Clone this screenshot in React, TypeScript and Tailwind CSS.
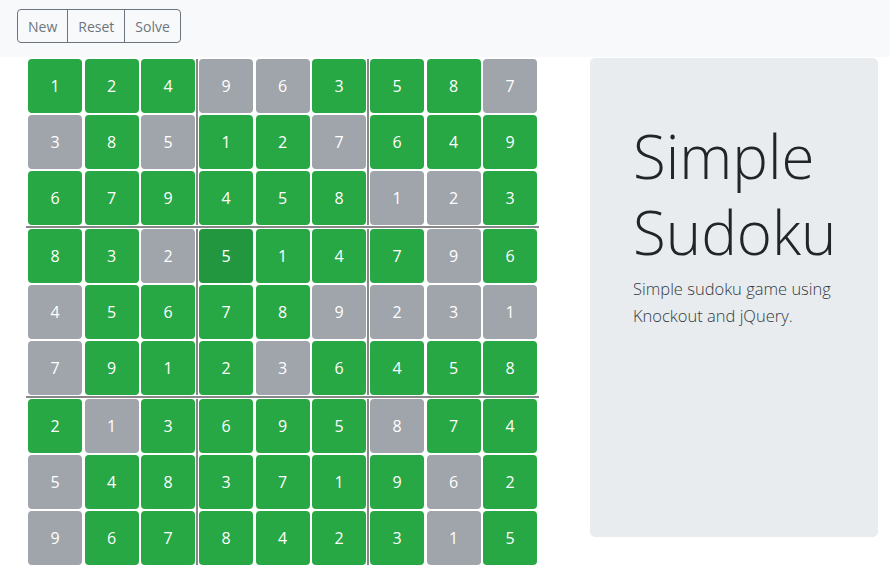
import React from "react";

const ROWS: string[] = [
  "1 2 4 9g 6g 3 5 8 7g",
  "3g 8 5g 1 2 7g 6 4 9",
  "6 7 9 4 5 8 1g 2g 3",
  "8 3 2g 5d 1 4 7 9g 6",
  "4g 5 6 7 8 9g 2g 3g 1g",
  "7g 9 1 2 3g 6 4 5 8",
  "2 1g 3 6 9 5 8g 7 4",
  "5g 4 8 3 7 1 9 6g 2",
  "9g 6 7 8 4 2 3 1g 5",
];

type Cell = { v: string; k: "g" | "d" | "n" };
const GRID: Cell[][] = ROWS.map((r) =>
  r.split(" ").map((t) => ({
    v: t[0],
    k: t[1] === "g" ? "g" : t[1] === "d" ? "d" : "n",
  }))
);

function CellView({ c }: { c: Cell }) {
  const bg =
    c.k === "g" ? "bg-[#a0a5ab]" : c.k === "d" ? "bg-[#23973f]" : "bg-[#28a745]";
  return (
    <div
      className={`${bg} w-[54px] h-[54px] rounded-[4px] flex items-center justify-center text-white text-[16px] leading-none`}
    >
      {c.v}
    </div>
  );
}

function Box({ br, bc }: { br: number; bc: number }) {
  const cells: Cell[] = [];
  for (let r = 0; r < 3; r++)
    for (let c = 0; c < 3; c++) cells.push(GRID[br * 3 + r][bc * 3 + c]);
  return (
    <div className="grid grid-cols-[54px_54px_54px] gap-x-[2.5px] gap-y-[2px]">
      {cells.map((c, i) => (
        <CellView key={i} c={c} />
      ))}
    </div>
  );
}

function BoxRow({ br }: { br: number }) {
  return (
    <div className="flex items-stretch">
      <Box br={br} bc={0} />
      <div className="w-[2px] mx-[1px] bg-[#888888]" />
      <Box br={br} bc={1} />
      <div className="w-[2px] mx-[1px] bg-[#888888]" />
      <Box br={br} bc={2} />
    </div>
  );
}

export default function App() {
  return (
    <div
      className="w-[890px] h-[582px] bg-white overflow-hidden text-[#212529]"
      style={{ fontFamily: '"Open Sans", "Noto Sans", sans-serif' }}
    >
      <div className="h-[57px] bg-[#f8f9fa] pl-[17px] pt-[9px]">
        <div className="inline-flex h-[34px] border border-[#6c757d] rounded-[4px] text-[#6c757d] text-[14px]">
          <div className="px-[10px] flex items-center">New</div>
          <div className="px-[10px] flex items-center border-l border-[#6c757d]">Reset</div>
          <div className="px-[10px] flex items-center border-l border-[#6c757d]">Solve</div>
        </div>
      </div>
      <div className="flex pt-[1px]">
        <div className="pl-[28px] pt-[1px]">
          <div className="flex flex-col">
            <BoxRow br={0} />
            <div className="h-[2px] my-[1px] -mx-[2px] bg-[#888888]" />
            <BoxRow br={1} />
            <div className="h-[2px] my-[1px] -mx-[2px] bg-[#888888]" />
            <BoxRow br={2} />
          </div>
        </div>
        <div className="ml-auto mr-[12px] w-[288px] h-[479px] bg-[#e9ecef] rounded-[5px] pl-[43px] pt-[60px]">
          <h1 className="text-[60px] leading-[76px] font-light text-[#212529]">
            Simple
            <br />
            Sudoku
          </h1>
          <p className="mt-[5px] text-[16.5px] leading-[27px] font-light text-[#343a40]">
            Simple sudoku game using
            <br />
            Knockout and jQuery.
          </p>
        </div>
      </div>
    </div>
  );
}
